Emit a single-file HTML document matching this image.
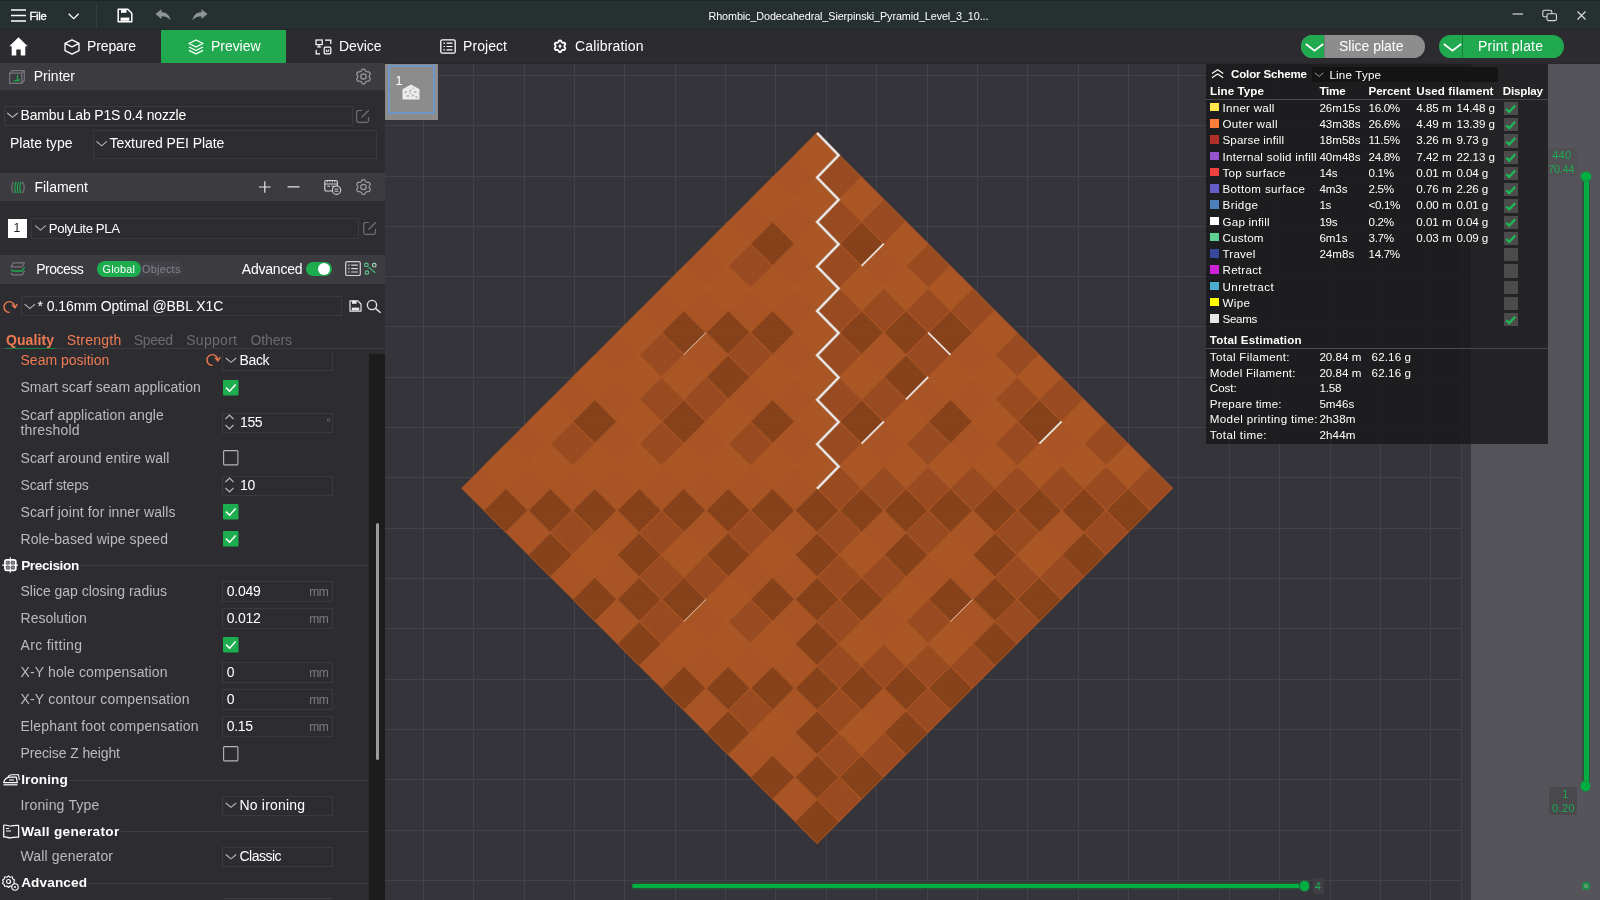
<!DOCTYPE html>
<html lang="en"><head><meta charset="utf-8"><title>Bambu Studio</title>
<style>
html,body{margin:0;padding:0;background:#35343a;}
body{width:1600px;height:900px;position:relative;overflow:hidden;font-family:'Liberation Sans', sans-serif;}
.t{position:absolute;white-space:pre;font-family:'Liberation Sans', sans-serif;}
svg{position:absolute;overflow:visible}

</style></head><body>
<div style="position:absolute;left:385px;top:63px;width:1215px;height:837px;background:#35343a;overflow:hidden"><svg width="1215" height="837" viewBox="385 63 1215 837" style="left:0;top:0"><rect x="1461.5" y="0" width="10" height="900" fill="#38373d"/><rect x="1471" y="0" width="140" height="900" fill="#55545a"/><path d="M423.5 0V900M473.5 0V900M524.5 0V900M574.5 0V900M624.5 0V900M675.5 0V900M725.5 0V900M775.5 0V900M826.5 0V900M876.5 0V900M927.5 0V900M977.5 0V900M1027.5 0V900M1078.5 0V900M1128.5 0V900M1178.5 0V900M1229.5 0V900M1279.5 0V900M1330.5 0V900M1380.5 0V900M1430.5 0V900M385 75.5H1461.5M385 125.5H1461.5M385 176.5H1461.5M385 226.5H1461.5M385 276.5H1461.5M385 326.5H1461.5M385 377.5H1461.5M385 427.5H1461.5M385 477.5H1461.5M385 528.5H1461.5M385 578.5H1461.5M385 628.5H1461.5M385 679.5H1461.5M385 729.5H1461.5M385 779.5H1461.5M385 830.5H1461.5M385 880.5H1461.5" stroke="#434248" stroke-width="1" fill="none"/><path d="M1461.5 0V900" stroke="#45444a" stroke-width="1" fill="none"/><defs><pattern id="hh" width="8" height="4.6" patternUnits="userSpaceOnUse"><rect width="8" height="4.6" fill="#88421b"/><rect y="0" width="8" height="2" fill="#85411a"/></pattern><pattern id="vv" width="4.4" height="8" patternUnits="userSpaceOnUse"><rect width="4.4" height="8" fill="#984a20"/><rect x="0" width="1.6" height="8" fill="#9a4b21"/></pattern><clipPath id="dc"><path d="M461.4 488.2L817.1 132.5L1172.8 488.2L817.1 843.9Z"/></clipPath></defs><path d="M461.4 488.2L817.1 132.5L1172.8 488.2L817.1 843.9Z" fill="#a85424"/><path d="M483.7 466.0L505.9 443.7L528.1 466.0L505.9 488.2ZM528.1 421.5L550.3 399.3L572.6 421.5L550.3 443.7ZM528.1 466.0L550.3 443.7L572.6 466.0L550.3 488.2ZM572.6 466.0L594.8 443.7L617.0 466.0L594.8 488.2ZM572.6 377.0L594.8 354.8L617.0 377.0L594.8 399.3ZM617.0 332.6L639.3 310.4L661.5 332.6L639.3 354.8ZM617.0 377.0L639.3 354.8L661.5 377.0L639.3 399.3ZM617.0 421.5L639.3 399.3L661.5 421.5L639.3 443.7ZM617.0 466.0L639.3 443.7L661.5 466.0L639.3 488.2ZM661.5 377.0L683.7 354.8L706.0 377.0L683.7 399.3ZM572.6 554.9L594.8 532.7L617.0 554.9L594.8 577.1ZM661.5 554.9L683.7 532.7L706.0 554.9L683.7 577.1ZM661.5 466.0L683.7 443.7L706.0 466.0L683.7 488.2ZM706.0 421.5L728.2 399.3L750.4 421.5L728.2 443.7ZM706.0 466.0L728.2 443.7L750.4 466.0L728.2 488.2ZM750.4 466.0L772.6 443.7L794.9 466.0L772.6 488.2ZM661.5 288.1L683.7 265.9L706.0 288.1L683.7 310.4ZM706.0 243.7L728.2 221.4L750.4 243.7L728.2 265.9ZM706.0 288.1L728.2 265.9L750.4 288.1L728.2 310.4ZM750.4 288.1L772.6 265.9L794.9 288.1L772.6 310.4ZM750.4 199.2L772.6 177.0L794.9 199.2L772.6 221.4ZM794.9 154.8L817.1 132.5L839.3 154.8L817.1 177.0ZM794.9 199.2L817.1 177.0L839.3 199.2L817.1 221.4ZM794.9 243.7L817.1 221.4L839.3 243.7L817.1 265.9ZM794.9 288.1L817.1 265.9L839.3 288.1L817.1 310.4ZM839.3 199.2L861.6 177.0L883.8 199.2L861.6 221.4ZM750.4 377.0L772.6 354.8L794.9 377.0L772.6 399.3ZM794.9 332.6L817.1 310.4L839.3 332.6L817.1 354.8ZM794.9 377.0L817.1 354.8L839.3 377.0L817.1 399.3ZM794.9 421.5L817.1 399.3L839.3 421.5L817.1 443.7ZM794.9 466.0L817.1 443.7L839.3 466.0L817.1 488.2ZM839.3 377.0L861.6 354.8L883.8 377.0L861.6 399.3ZM839.3 288.1L861.6 265.9L883.8 288.1L861.6 310.4ZM883.8 243.7L906.0 221.4L928.2 243.7L906.0 265.9ZM883.8 288.1L906.0 265.9L928.2 288.1L906.0 310.4ZM928.2 288.1L950.5 265.9L972.7 288.1L950.5 310.4ZM661.5 643.8L683.7 621.6L706.0 643.8L683.7 666.0ZM706.0 599.4L728.2 577.1L750.4 599.4L728.2 621.6ZM706.0 643.8L728.2 621.6L750.4 643.8L728.2 666.0ZM750.4 643.8L772.6 621.6L794.9 643.8L772.6 666.0ZM750.4 554.9L772.6 532.7L794.9 554.9L772.6 577.1ZM839.3 554.9L861.6 532.7L883.8 554.9L861.6 577.1ZM750.4 732.7L772.6 710.5L794.9 732.7L772.6 755.0ZM839.3 732.7L861.6 710.5L883.8 732.7L861.6 755.0ZM839.3 643.8L861.6 621.6L883.8 643.8L861.6 666.0ZM883.8 599.4L906.0 577.1L928.2 599.4L906.0 621.6ZM883.8 643.8L906.0 621.6L928.2 643.8L906.0 666.0ZM928.2 643.8L950.5 621.6L972.7 643.8L950.5 666.0ZM839.3 466.0L861.6 443.7L883.8 466.0L861.6 488.2ZM883.8 421.5L906.0 399.3L928.2 421.5L906.0 443.7ZM883.8 466.0L906.0 443.7L928.2 466.0L906.0 488.2ZM928.2 466.0L950.5 443.7L972.7 466.0L950.5 488.2ZM928.2 377.0L950.5 354.8L972.7 377.0L950.5 399.3ZM972.7 332.6L994.9 310.4L1017.2 332.6L994.9 354.8ZM972.7 377.0L994.9 354.8L1017.2 377.0L994.9 399.3ZM972.7 421.5L994.9 399.3L1017.2 421.5L994.9 443.7ZM972.7 466.0L994.9 443.7L1017.2 466.0L994.9 488.2ZM1017.2 377.0L1039.4 354.8L1061.6 377.0L1039.4 399.3ZM928.2 554.9L950.5 532.7L972.7 554.9L950.5 577.1ZM1017.2 554.9L1039.4 532.7L1061.6 554.9L1039.4 577.1ZM1017.2 466.0L1039.4 443.7L1061.6 466.0L1039.4 488.2ZM1061.6 421.5L1083.9 399.3L1106.1 421.5L1083.9 443.7ZM1061.6 466.0L1083.9 443.7L1106.1 466.0L1083.9 488.2ZM1106.1 466.0L1128.3 443.7L1150.5 466.0L1128.3 488.2Z" fill="#aa5625" stroke="#aa5625" stroke-width="0.4"/><path d="M550.3 443.7L572.6 421.5L594.8 443.7L572.6 466.0ZM550.3 532.7L572.6 510.4L594.8 532.7L572.6 554.9ZM639.3 354.8L661.5 332.6L683.7 354.8L661.5 377.0ZM639.3 443.7L661.5 421.5L683.7 443.7L661.5 466.0ZM683.7 399.3L706.0 377.0L728.2 399.3L706.0 421.5ZM639.3 399.3L661.5 377.0L683.7 399.3L661.5 421.5ZM639.3 532.7L661.5 510.4L683.7 532.7L661.5 554.9ZM639.3 621.6L661.5 599.4L683.7 621.6L661.5 643.8ZM683.7 577.1L706.0 554.9L728.2 577.1L706.0 599.4ZM639.3 577.1L661.5 554.9L683.7 577.1L661.5 599.4ZM728.2 443.7L750.4 421.5L772.6 443.7L750.4 466.0ZM728.2 532.7L750.4 510.4L772.6 532.7L750.4 554.9ZM728.2 265.9L750.4 243.7L772.6 265.9L750.4 288.1ZM728.2 354.8L750.4 332.6L772.6 354.8L750.4 377.0ZM817.1 177.0L839.3 154.8L861.6 177.0L839.3 199.2ZM817.1 265.9L839.3 243.7L861.6 265.9L839.3 288.1ZM861.6 221.4L883.8 199.2L906.0 221.4L883.8 243.7ZM817.1 221.4L839.3 199.2L861.6 221.4L839.3 243.7ZM817.1 354.8L839.3 332.6L861.6 354.8L839.3 377.0ZM817.1 443.7L839.3 421.5L861.6 443.7L839.3 466.0ZM861.6 399.3L883.8 377.0L906.0 399.3L883.8 421.5ZM817.1 399.3L839.3 377.0L861.6 399.3L839.3 421.5ZM861.6 310.4L883.8 288.1L906.0 310.4L883.8 332.6ZM817.1 310.4L839.3 288.1L861.6 310.4L839.3 332.6ZM906.0 265.9L928.2 243.7L950.5 265.9L928.2 288.1ZM906.0 354.8L928.2 332.6L950.5 354.8L928.2 377.0ZM950.5 310.4L972.7 288.1L994.9 310.4L972.7 332.6ZM906.0 310.4L928.2 288.1L950.5 310.4L928.2 332.6ZM728.2 621.6L750.4 599.4L772.6 621.6L750.4 643.8ZM728.2 710.5L750.4 688.3L772.6 710.5L750.4 732.7ZM817.1 532.7L839.3 510.4L861.6 532.7L839.3 554.9ZM817.1 621.6L839.3 599.4L861.6 621.6L839.3 643.8ZM861.6 577.1L883.8 554.9L906.0 577.1L883.8 599.4ZM817.1 577.1L839.3 554.9L861.6 577.1L839.3 599.4ZM817.1 710.5L839.3 688.3L861.6 710.5L839.3 732.7ZM817.1 799.4L839.3 777.2L861.6 799.4L839.3 821.6ZM861.6 755.0L883.8 732.7L906.0 755.0L883.8 777.2ZM817.1 755.0L839.3 732.7L861.6 755.0L839.3 777.2ZM861.6 666.0L883.8 643.8L906.0 666.0L883.8 688.3ZM817.1 666.0L839.3 643.8L861.6 666.0L839.3 688.3ZM906.0 621.6L928.2 599.4L950.5 621.6L928.2 643.8ZM906.0 710.5L928.2 688.3L950.5 710.5L928.2 732.7ZM950.5 666.0L972.7 643.8L994.9 666.0L972.7 688.3ZM906.0 666.0L928.2 643.8L950.5 666.0L928.2 688.3ZM861.6 488.2L883.8 466.0L906.0 488.2L883.8 510.4ZM817.1 488.2L839.3 466.0L861.6 488.2L839.3 510.4ZM906.0 443.7L928.2 421.5L950.5 443.7L928.2 466.0ZM906.0 532.7L928.2 510.4L950.5 532.7L928.2 554.9ZM950.5 488.2L972.7 466.0L994.9 488.2L972.7 510.4ZM906.0 488.2L928.2 466.0L950.5 488.2L928.2 510.4ZM994.9 354.8L1017.2 332.6L1039.4 354.8L1017.2 377.0ZM994.9 443.7L1017.2 421.5L1039.4 443.7L1017.2 466.0ZM1039.4 399.3L1061.6 377.0L1083.9 399.3L1061.6 421.5ZM994.9 399.3L1017.2 377.0L1039.4 399.3L1017.2 421.5ZM994.9 532.7L1017.2 510.4L1039.4 532.7L1017.2 554.9ZM994.9 621.6L1017.2 599.4L1039.4 621.6L1017.2 643.8ZM1039.4 577.1L1061.6 554.9L1083.9 577.1L1061.6 599.4ZM994.9 577.1L1017.2 554.9L1039.4 577.1L1017.2 599.4ZM1039.4 488.2L1061.6 466.0L1083.9 488.2L1061.6 510.4ZM994.9 488.2L1017.2 466.0L1039.4 488.2L1017.2 510.4ZM1083.9 443.7L1106.1 421.5L1128.3 443.7L1106.1 466.0ZM1083.9 532.7L1106.1 510.4L1128.3 532.7L1106.1 554.9ZM1128.3 488.2L1150.5 466.0L1172.8 488.2L1150.5 510.4ZM1083.9 488.2L1106.1 466.0L1128.3 488.2L1106.1 510.4Z" fill="url(#vv)" stroke="#984a20" stroke-width="0.4"/><path d="M483.7 510.4L505.9 488.2L528.1 510.4L505.9 532.7ZM528.1 510.4L550.3 488.2L572.6 510.4L550.3 532.7ZM528.1 554.9L550.3 532.7L572.6 554.9L550.3 577.1ZM572.6 510.4L594.8 488.2L617.0 510.4L594.8 532.7ZM572.6 421.5L594.8 399.3L617.0 421.5L594.8 443.7ZM661.5 421.5L683.7 399.3L706.0 421.5L683.7 443.7ZM572.6 599.4L594.8 577.1L617.0 599.4L594.8 621.6ZM617.0 510.4L639.3 488.2L661.5 510.4L639.3 532.7ZM617.0 554.9L639.3 532.7L661.5 554.9L639.3 577.1ZM617.0 599.4L639.3 577.1L661.5 599.4L639.3 621.6ZM617.0 643.8L639.3 621.6L661.5 643.8L639.3 666.0ZM661.5 599.4L683.7 577.1L706.0 599.4L683.7 621.6ZM661.5 510.4L683.7 488.2L706.0 510.4L683.7 532.7ZM706.0 510.4L728.2 488.2L750.4 510.4L728.2 532.7ZM706.0 554.9L728.2 532.7L750.4 554.9L728.2 577.1ZM750.4 510.4L772.6 488.2L794.9 510.4L772.6 532.7ZM661.5 332.6L683.7 310.4L706.0 332.6L683.7 354.8ZM706.0 332.6L728.2 310.4L750.4 332.6L728.2 354.8ZM706.0 377.0L728.2 354.8L750.4 377.0L728.2 399.3ZM750.4 332.6L772.6 310.4L794.9 332.6L772.6 354.8ZM750.4 243.7L772.6 221.4L794.9 243.7L772.6 265.9ZM839.3 243.7L861.6 221.4L883.8 243.7L861.6 265.9ZM750.4 421.5L772.6 399.3L794.9 421.5L772.6 443.7ZM839.3 421.5L861.6 399.3L883.8 421.5L861.6 443.7ZM839.3 332.6L861.6 310.4L883.8 332.6L861.6 354.8ZM883.8 332.6L906.0 310.4L928.2 332.6L906.0 354.8ZM883.8 377.0L906.0 354.8L928.2 377.0L906.0 399.3ZM928.2 332.6L950.5 310.4L972.7 332.6L950.5 354.8ZM661.5 688.3L683.7 666.0L706.0 688.3L683.7 710.5ZM706.0 688.3L728.2 666.0L750.4 688.3L728.2 710.5ZM706.0 732.7L728.2 710.5L750.4 732.7L728.2 755.0ZM750.4 688.3L772.6 666.0L794.9 688.3L772.6 710.5ZM750.4 599.4L772.6 577.1L794.9 599.4L772.6 621.6ZM794.9 510.4L817.1 488.2L839.3 510.4L817.1 532.7ZM794.9 554.9L817.1 532.7L839.3 554.9L817.1 577.1ZM794.9 599.4L817.1 577.1L839.3 599.4L817.1 621.6ZM794.9 643.8L817.1 621.6L839.3 643.8L817.1 666.0ZM839.3 599.4L861.6 577.1L883.8 599.4L861.6 621.6ZM750.4 777.2L772.6 755.0L794.9 777.2L772.6 799.4ZM794.9 688.3L817.1 666.0L839.3 688.3L817.1 710.5ZM794.9 732.7L817.1 710.5L839.3 732.7L817.1 755.0ZM794.9 777.2L817.1 755.0L839.3 777.2L817.1 799.4ZM794.9 821.6L817.1 799.4L839.3 821.6L817.1 843.9ZM839.3 777.2L861.6 755.0L883.8 777.2L861.6 799.4ZM839.3 688.3L861.6 666.0L883.8 688.3L861.6 710.5ZM883.8 688.3L906.0 666.0L928.2 688.3L906.0 710.5ZM883.8 732.7L906.0 710.5L928.2 732.7L906.0 755.0ZM928.2 688.3L950.5 666.0L972.7 688.3L950.5 710.5ZM839.3 510.4L861.6 488.2L883.8 510.4L861.6 532.7ZM883.8 510.4L906.0 488.2L928.2 510.4L906.0 532.7ZM883.8 554.9L906.0 532.7L928.2 554.9L906.0 577.1ZM928.2 510.4L950.5 488.2L972.7 510.4L950.5 532.7ZM928.2 421.5L950.5 399.3L972.7 421.5L950.5 443.7ZM1017.2 421.5L1039.4 399.3L1061.6 421.5L1039.4 443.7ZM928.2 599.4L950.5 577.1L972.7 599.4L950.5 621.6ZM972.7 510.4L994.9 488.2L1017.2 510.4L994.9 532.7ZM972.7 554.9L994.9 532.7L1017.2 554.9L994.9 577.1ZM972.7 599.4L994.9 577.1L1017.2 599.4L994.9 621.6ZM972.7 643.8L994.9 621.6L1017.2 643.8L994.9 666.0ZM1017.2 599.4L1039.4 577.1L1061.6 599.4L1039.4 621.6ZM1017.2 510.4L1039.4 488.2L1061.6 510.4L1039.4 532.7ZM1061.6 510.4L1083.9 488.2L1106.1 510.4L1083.9 532.7ZM1061.6 554.9L1083.9 532.7L1106.1 554.9L1083.9 577.1ZM1106.1 510.4L1128.3 488.2L1150.5 510.4L1128.3 532.7Z" fill="url(#hh)" stroke="#88421b" stroke-width="0.4"/><path d="M16.8 43.6L906.0 932.8M16.8 932.8L906.0 43.6M61.3 43.6L950.5 932.8M61.3 932.8L950.5 43.6M105.7 43.6L994.9 932.8M105.7 932.8L994.9 43.6M150.2 43.6L1039.4 932.8M150.2 932.8L1039.4 43.6M194.7 43.6L1083.9 932.8M194.7 932.8L1083.9 43.6M239.1 43.6L1128.3 932.8M239.1 932.8L1128.3 43.6M283.6 43.6L1172.8 932.8M283.6 932.8L1172.8 43.6M328.0 43.6L1217.2 932.8M328.0 932.8L1217.2 43.6M372.5 43.6L1261.7 932.8M372.5 932.8L1261.7 43.6M417.0 43.6L1306.2 932.8M417.0 932.8L1306.2 43.6M461.4 43.6L1350.6 932.8M461.4 932.8L1350.6 43.6M505.9 43.6L1395.1 932.8M505.9 932.8L1395.1 43.6M550.3 43.6L1439.5 932.8M550.3 932.8L1439.5 43.6M594.8 43.6L1484.0 932.8M594.8 932.8L1484.0 43.6M639.3 43.6L1528.5 932.8M639.3 932.8L1528.5 43.6M683.7 43.6L1572.9 932.8M683.7 932.8L1572.9 43.6M728.2 43.6L1617.4 932.8M728.2 932.8L1617.4 43.6" stroke="#ae5927" stroke-opacity="0.7" stroke-width="1.5" fill="none" clip-path="url(#dc)"/><polyline points="817.1,133.1 838.7,155.2 817.1,177.5 838.7,199.7 817.1,221.9 838.7,244.2 817.1,266.4 838.7,288.6 817.1,310.9 838.7,333.1 817.1,355.3 838.7,377.5 817.1,399.8 838.7,422.0 817.1,444.2 838.7,466.5 817.1,488.7" fill="none" stroke="#b9aca6" stroke-width="3.2" stroke-linejoin="miter" stroke-opacity="0.6"/><polyline points="817.1,133.1 838.7,155.2 817.1,177.5 838.7,199.7 817.1,221.9 838.7,244.2 817.1,266.4 838.7,288.6 817.1,310.9 838.7,333.1 817.1,355.3 838.7,377.5 817.1,399.8 838.7,422.0 817.1,444.2 838.7,466.5 817.1,488.7" fill="none" stroke="#ece8e4" stroke-width="2.1" stroke-linejoin="miter"/><path d="M861.6 265.9L883.8 243.7" stroke="#e6e0dc" stroke-width="1.8" fill="none"/><path d="M928.2 332.6L950.5 354.8" stroke="#e6e0dc" stroke-width="1.8" fill="none"/><path d="M906.0 399.3L928.2 377.0" stroke="#e6e0dc" stroke-width="1.8" fill="none"/><path d="M861.6 443.7L883.8 421.5" stroke="#e6e0dc" stroke-width="1.8" fill="none"/><path d="M1039.4 443.7L1061.6 421.5" stroke="#e6e0dc" stroke-width="1.8" fill="none"/><path d="M683.7 354.8L706.0 332.6" stroke="#d9c9c0" stroke-width="1.0" fill="none"/><path d="M683.7 621.6L706.0 599.4" stroke="#d9c9c0" stroke-width="1.0" fill="none"/><path d="M950.5 621.6L972.7 599.4" stroke="#d9c9c0" stroke-width="1.0" fill="none"/></svg></div><div style="position:absolute;left:0px;top:0px;width:1600px;height:29px;background:#273031;"></div><div style="position:absolute;left:0px;top:0px;width:1600px;height:1px;background:#1f2627;"></div><div style="position:absolute;left:0px;top:29px;width:1600px;height:1px;background:#25292b;"></div><div style="position:absolute;left:0px;top:30px;width:1600px;height:33px;background:#2c2c30;"></div><svg width="16" height="14" style="left:10.5px;top:8.5px" viewBox="0 0 16 14"><path d="M0 1H15M0 6.5H15M0 12H15" stroke="#fff" stroke-width="1.6" fill="none"/></svg><svg width="12" height="7" style="left:68px;top:12.5px" viewBox="0 0 12 7"><path d="M0.7 0.7L5.7 5.7L10.7 0.7" stroke="#fff" stroke-width="1.3" fill="none"/></svg><div style="position:absolute;left:96px;top:4px;width:1px;height:24px;background:#333d3f;"></div><svg width="16" height="15" style="left:117px;top:8px" viewBox="0 0 16 15"><path d="M1.2 1.2H10.8L14.8 5.2V13.8H1.2Z" stroke="#fff" stroke-width="1.5" fill="none" stroke-linejoin="round"/><rect x="4" y="1.2" width="5.5" height="3.6" fill="#fff"/><rect x="3.6" y="9.6" width="8.8" height="3.2" fill="#fff"/></svg><svg width="16" height="12" style="left:154.5px;top:9px" viewBox="0 0 16 12"><path d="M0.5 5L6.5 0.3V3.2C11 3.2 14.8 5.8 15.5 11.5C13.3 8.3 10.5 7.3 6.5 7.3V10Z" fill="#8f9596"/></svg><svg width="16" height="12" style="left:192px;top:9px" viewBox="0 0 16 12"><path d="M15.5 5L9.5 0.3V3.2C5 3.2 1.2 5.8 0.5 11.5C2.7 8.3 5.5 7.3 9.5 7.3V10Z" fill="#8f9596"/></svg><svg width="80" height="14" style="left:1510px;top:8px" viewBox="0 0 80 14"><path d="M2.5 6H13" stroke="#d8dadb" stroke-width="1.2"/><rect x="32.8" y="2.2" width="9" height="6.6" rx="1.5" fill="none" stroke="#d8dadb" stroke-width="1.1"/><rect x="37" y="5.8" width="9.5" height="6.8" rx="1.5" fill="#283133" stroke="#d8dadb" stroke-width="1.1"/><path d="M67.5 3.5L75.5 11.5M75.5 3.5L67.5 11.5" stroke="#d8dadb" stroke-width="1.2"/></svg><svg width="19" height="19" style="left:9px;top:37px" viewBox="0 0 19 19"><path d="M9.5 0.3L0.3 9.3H2.7V18.5H7.3V12.5H11.7V18.5H16.3V9.3H18.7Z" fill="#fff"/></svg><svg width="16" height="16" style="left:63.5px;top:38.5px" viewBox="0 0 16 16"><path d="M8 0.8L15 4.3V11.7L8 15.2L1 11.7V4.3Z M1 4.3L8 7.8L15 4.3" stroke="#fff" stroke-width="1.3" fill="none" stroke-linejoin="round"/></svg><div style="position:absolute;left:161px;top:30px;width:125px;height:32.5px;background:#21a94f;"></div><svg width="16" height="16" style="left:187.5px;top:38.5px" viewBox="0 0 16 16"><path d="M8 1L15 4.5L8 8L1 4.5Z M1 8L8 11.5L15 8 M1 11.3L8 14.8L15 11.3" stroke="#fff" stroke-width="1.3" fill="none" stroke-linejoin="round"/></svg><svg width="17" height="16" style="left:315px;top:38.5px" viewBox="0 0 17 16"><rect x="1" y="1" width="6.2" height="4.6" fill="none" stroke="#fff" stroke-width="1.2"/><path d="M4 5.6V8M2 8H6.2" stroke="#fff" stroke-width="1.2"/><path d="M10 1.2H15.8V5 M1.2 11V14.8H5" stroke="#fff" stroke-width="1.2" fill="none"/><rect x="9.2" y="8.2" width="6.6" height="6.6" rx="1" fill="none" stroke="#fff" stroke-width="1.2"/><path d="M11.3 10.5V12.3H13.7V10.5" stroke="#fff" stroke-width="1" fill="none"/></svg><svg width="16" height="15" style="left:440px;top:39px" viewBox="0 0 16 15"><rect x="0.8" y="0.8" width="14.4" height="13.4" rx="1.5" fill="none" stroke="#fff" stroke-width="1.3"/><path d="M3.5 4.2H5M6.5 4.2H12.5M3.5 7.5H5M6.5 7.5H12.5M3.5 10.8H5M6.5 10.8H12.5" stroke="#fff" stroke-width="1.2"/></svg><svg width="1" height="1" style="left:0;top:0"><polygon points="565.02,49.20 564.75,49.63 564.39,49.98 563.61,49.91 562.88,49.73 562.53,49.91 562.20,50.12 561.86,50.30 561.53,50.51 561.32,51.23 561.00,51.94 560.51,52.08 560.00,52.10 559.49,52.08 559.00,51.94 558.68,51.23 558.47,50.51 558.14,50.30 557.80,50.12 557.47,49.91 557.12,49.73 556.39,49.91 555.61,49.98 555.25,49.63 554.98,49.20 554.74,48.75 554.62,48.26 555.07,47.62 555.59,47.08 555.61,46.68 555.59,46.30 555.61,45.92 555.59,45.52 555.07,44.98 554.62,44.34 554.74,43.85 554.98,43.40 555.25,42.97 555.61,42.62 556.39,42.69 557.12,42.87 557.47,42.69 557.80,42.48 558.14,42.30 558.47,42.09 558.68,41.37 559.00,40.66 559.49,40.52 560.00,40.50 560.51,40.52 561.00,40.66 561.32,41.37 561.53,42.09 561.86,42.30 562.20,42.48 562.53,42.69 562.88,42.87 563.61,42.69 564.39,42.62 564.75,42.97 565.02,43.40 565.26,43.85 565.38,44.34 564.93,44.98 564.41,45.52 564.39,45.92 564.41,46.30 564.39,46.68 564.41,47.08 564.93,47.62 565.38,48.26 565.26,48.75" fill="none" stroke="#fff" stroke-width="1.8" stroke-linejoin="round"/><path d="M560 44.099999999999994L562 46.5H560.7V48.3H559.3V46.5H558Z" fill="#fff"/></svg><div style="position:absolute;left:1301px;top:35px;width:124px;height:23px;border-radius:11.5px;background:#8d8d8d;overflow:hidden"><div style="position:absolute;left:0;top:0;width:23px;height:23px;background:#21a94f"></div><div style="position:absolute;left:23px;top:0;width:1px;height:23px;background:#6d7d72"></div></div><div style="position:absolute;left:1439px;top:35px;width:125px;height:23px;border-radius:11.5px;background:#21a94f;overflow:hidden"><div style="position:absolute;left:23px;top:0;width:1px;height:23px;background:#17803a"></div></div><svg width="19" height="9" style="left:1304.8px;top:42.6px" viewBox="0 0 19 9"><path d="M0.8 1L9.5 7.6L18.2 1" stroke="#fff" stroke-width="1.8" fill="none"/></svg><svg width="19" height="9" style="left:1442.8px;top:42.6px" viewBox="0 0 19 9"><path d="M0.8 1L9.5 7.6L18.2 1" stroke="#fff" stroke-width="1.8" fill="none"/></svg><div style="position:absolute;left:0px;top:63px;width:385px;height:837px;background:#2d2d31;"></div><div style="position:absolute;left:0px;top:62.5px;width:385px;height:27.5px;background:#3b3b40;"></div><svg width="16" height="14" style="left:9px;top:69.5px" viewBox="0 0 16 14"><path d="M0.7 3.2L3.2 0.7H15.3V10.5L12.8 13.3H0.7Z M0.7 3.2H12.8V13.3 M12.8 3.2L15.3 0.7" fill="none" stroke="#77777d" stroke-width="1.2" stroke-linejoin="round"/><path d="M3 11.3H10.5V9L7 9.8L3 11.3Z" fill="#1dad4f"/><path d="M8.5 5V9" stroke="#1dad4f" stroke-width="1.2"/></svg><svg width="1" height="1" style="left:0;top:0"><polygon points="369.82,80.15 369.48,80.69 368.98,81.10 368.15,81.15 367.35,81.09 366.85,81.28 366.42,81.56 365.97,81.79 365.55,82.13 365.20,82.85 364.74,83.55 364.14,83.77 363.50,83.80 362.86,83.77 362.26,83.55 361.80,82.85 361.45,82.13 361.03,81.79 360.58,81.56 360.15,81.28 359.65,81.09 358.85,81.15 358.02,81.10 357.52,80.69 357.18,80.15 356.88,79.59 356.78,78.95 357.15,78.20 357.60,77.54 357.68,77.01 357.66,76.50 357.68,75.99 357.60,75.46 357.15,74.80 356.78,74.05 356.88,73.41 357.18,72.85 357.52,72.31 358.02,71.90 358.85,71.85 359.65,71.91 360.15,71.72 360.58,71.44 361.03,71.21 361.45,70.87 361.80,70.15 362.26,69.45 362.86,69.23 363.50,69.20 364.14,69.23 364.74,69.45 365.20,70.15 365.55,70.87 365.97,71.21 366.42,71.44 366.85,71.72 367.35,71.91 368.15,71.85 368.98,71.90 369.48,72.31 369.82,72.85 370.12,73.41 370.22,74.05 369.85,74.80 369.40,75.46 369.32,75.99 369.34,76.50 369.32,77.01 369.40,77.54 369.85,78.20 370.22,78.95 370.12,79.59" fill="none" stroke="#9a9aa0" stroke-width="1.25" stroke-linejoin="round"/><circle cx="363.5" cy="76.5" r="2.70" fill="none" stroke="#9a9aa0" stroke-width="1.25"/></svg><div style="position:absolute;left:3.5px;top:105.5px;width:347px;height:18.5px;border:1px solid #39393e;background:none;box-sizing:content-box"></div><svg width="1" height="1" style="left:0;top:0"><path d="M7.3 113.0L12.5 117.4L17.7 113.0" stroke="#b9b9be" stroke-width="1.1" fill="none"/></svg><svg width="14" height="14" style="left:356px;top:108.5px" viewBox="0 0 14 14"><path d="M6 1.5H2.5C1.4 1.5 0.7 2.2 0.7 3.3V11.5C0.7 12.6 1.4 13.3 2.5 13.3H10.7C11.8 13.3 12.5 12.6 12.5 11.5V8" fill="none" stroke="#6f6f75" stroke-width="1.2"/><path d="M5.5 8.5L12.8 1.2" stroke="#6f6f75" stroke-width="1.3"/></svg><div style="position:absolute;left:92.5px;top:130px;width:282px;height:26.5px;border:1px solid #39393e;background:none;box-sizing:content-box"></div><svg width="1" height="1" style="left:0;top:0"><path d="M96.5 141.39999999999998L101.7 145.79999999999998L106.9 141.39999999999998" stroke="#b9b9be" stroke-width="1.1" fill="none"/></svg><div style="position:absolute;left:0px;top:173px;width:385px;height:28px;background:#3b3b40;"></div><svg width="14" height="13" style="left:10.5px;top:180.5px" viewBox="0 0 14 13"><path d="M2.6 0.8C0.2 3.5 0.2 9.5 2.6 12.2" fill="none" stroke="#77777d" stroke-width="1.2"/><path d="M11.4 0.8C13.8 3.5 13.8 9.5 11.4 12.2" fill="none" stroke="#77777d" stroke-width="1.2"/><path d="M5.2 0.8C3.4 3.5 3.4 9.5 5.2 12.2M7.7 0.8C5.9 3.5 5.9 9.5 7.7 12.2M10.2 0.8C8.4 3.5 8.4 9.5 10.2 12.2" fill="none" stroke="#1dad4f" stroke-width="1.2"/></svg><svg width="1" height="1" style="left:0;top:0"><path d="M259 187H270.6M264.8 181.2V192.8M287.6 186.8H299.4" stroke="#e8e8ea" stroke-width="1.2"/></svg><svg width="18" height="16" style="left:324px;top:179px" viewBox="0 0 18 16"><rect x="0.8" y="1.5" width="12.6" height="10.5" rx="1.5" fill="none" stroke="#d2d2d6" stroke-width="1.2"/><path d="M0.8 5H13.4M3.2 7.3H6M7.5 7.3H10.5" stroke="#d2d2d6" stroke-width="1.1"/><path d="M3.4 1.5V3.2M5.9 1.5V3.2M8.4 1.5V3.2M10.9 1.5V3.2" stroke="#d2d2d6" stroke-width="1"/><circle cx="12.5" cy="11.2" r="4.2" fill="#3b3b40" stroke="#d2d2d6" stroke-width="1.1"/><path d="M10.5 10.2H14.5M10.5 12.3H14.5" stroke="#d2d2d6" stroke-width="0.9"/></svg><svg width="1" height="1" style="left:0;top:0"><polygon points="369.82,190.65 369.48,191.19 368.98,191.60 368.15,191.65 367.35,191.59 366.85,191.78 366.42,192.06 365.97,192.29 365.55,192.63 365.20,193.35 364.74,194.05 364.14,194.27 363.50,194.30 362.86,194.27 362.26,194.05 361.80,193.35 361.45,192.63 361.03,192.29 360.58,192.06 360.15,191.78 359.65,191.59 358.85,191.65 358.02,191.60 357.52,191.19 357.18,190.65 356.88,190.09 356.78,189.45 357.15,188.70 357.60,188.04 357.68,187.51 357.66,187.00 357.68,186.49 357.60,185.96 357.15,185.30 356.78,184.55 356.88,183.91 357.18,183.35 357.52,182.81 358.02,182.40 358.85,182.35 359.65,182.41 360.15,182.22 360.58,181.94 361.03,181.71 361.45,181.37 361.80,180.65 362.26,179.95 362.86,179.73 363.50,179.70 364.14,179.73 364.74,179.95 365.20,180.65 365.55,181.37 365.97,181.71 366.42,181.94 366.85,182.22 367.35,182.41 368.15,182.35 368.98,182.40 369.48,182.81 369.82,183.35 370.12,183.91 370.22,184.55 369.85,185.30 369.40,185.96 369.32,186.49 369.34,187.00 369.32,187.51 369.40,188.04 369.85,188.70 370.22,189.45 370.12,190.09" fill="none" stroke="#9a9aa0" stroke-width="1.25" stroke-linejoin="round"/><circle cx="363.5" cy="187" r="2.70" fill="none" stroke="#9a9aa0" stroke-width="1.25"/></svg><div style="position:absolute;left:7.5px;top:218.8px;width:19px;height:19px;background:#fff;"></div><div style="position:absolute;left:31px;top:218px;width:326px;height:18.5px;border:1px solid #39393e;background:none;box-sizing:content-box"></div><svg width="1" height="1" style="left:0;top:0"><path d="M35.3 225.7L40.5 230.1L45.699999999999996 225.7" stroke="#b9b9be" stroke-width="1.1" fill="none"/></svg><svg width="14" height="14" style="left:363px;top:221px" viewBox="0 0 14 14"><path d="M6 1.5H2.5C1.4 1.5 0.7 2.2 0.7 3.3V11.5C0.7 12.6 1.4 13.3 2.5 13.3H10.7C11.8 13.3 12.5 12.6 12.5 11.5V8" fill="none" stroke="#6f6f75" stroke-width="1.2"/><path d="M5.5 8.5L12.8 1.2" stroke="#6f6f75" stroke-width="1.3"/></svg><div style="position:absolute;left:0px;top:255px;width:385px;height:28.5px;background:#3b3b40;"></div><svg width="16" height="14" style="left:10px;top:262px" viewBox="0 0 16 14"><path d="M3.5 0.8H14.5L12 4.8H1Z" fill="none" stroke="#77777d" stroke-width="1.2" stroke-linejoin="round"/><path d="M1.2 7.3C1.5 8.7 2 9 3 9H12L14.6 5.2" fill="none" stroke="#1dad4f" stroke-width="1.3"/><path d="M1.2 11C1.5 12.4 2 12.9 3 12.9H12L14.6 9" fill="none" stroke="#77777d" stroke-width="1.3"/></svg><div style="position:absolute;left:97px;top:261px;width:85.5px;height:16px;border-radius:8px;background:#404046"></div><div style="position:absolute;left:97px;top:261px;width:43.5px;height:16px;border-radius:8px;background:#1dad4f"></div><div style="position:absolute;left:305.5px;top:261.8px;width:26px;height:14.6px;border-radius:7.3px;background:#1dad4f"></div><div style="position:absolute;left:317.6px;top:263px;width:12.2px;height:12.2px;border-radius:6.1px;background:#fff"></div><svg width="16" height="16" style="left:344.5px;top:261px" viewBox="0 0 16 16"><rect x="0.7" y="0.7" width="14.6" height="13.8" rx="1.6" fill="none" stroke="#d2d2d6" stroke-width="1.2"/><path d="M3.2 4.2H4.6M6.2 4.2H12.8M3.2 7.6H4.6M6.2 7.6H12.8M3.2 11H4.6M6.2 11H12.8" stroke="#d2d2d6" stroke-width="1.2"/></svg><svg width="14" height="13" style="left:364px;top:262.3px" viewBox="0 0 14 13"><circle cx="2.4" cy="2.9" r="1.8" fill="none" stroke="#5cc088" stroke-width="1.2"/><circle cx="3" cy="10.6" r="1.8" fill="none" stroke="#5cc088" stroke-width="1.2"/><circle cx="10.3" cy="3.2" r="1.8" fill="none" stroke="#9fd8b6" stroke-width="1.2"/><path d="M4.6 5.2L11.3 10.8" stroke="#3fb873" stroke-width="1.3"/></svg><svg width="15" height="14" style="left:3px;top:299.5px" viewBox="0 0 15 14"><path d="M6.6 12.4A5.4 5.4 0 1 1 11.8 7" fill="none" stroke="#ef7b52" stroke-width="1.35"/><path d="M8.9 4.6L11.9 7.8L14.3 4.2" fill="none" stroke="#ef7b52" stroke-width="1.35"/></svg><div style="position:absolute;left:20.5px;top:296.4px;width:319.5px;height:18px;border:1px solid #39393e;background:none;box-sizing:content-box"></div><svg width="1" height="1" style="left:0;top:0"><path d="M24.6 304.2L29.8 308.59999999999997L35.0 304.2" stroke="#b9b9be" stroke-width="1.1" fill="none"/></svg><svg width="13" height="12" style="left:348.5px;top:299.8px" viewBox="0 0 13 12"><path d="M1 0.8H8.6L12 4V11.2H1Z" fill="none" stroke="#e8e8ea" stroke-width="1.2" stroke-linejoin="round"/><rect x="3" y="0.8" width="4.6" height="3" fill="#e8e8ea"/><rect x="2.8" y="7.6" width="7.4" height="2.8" fill="#e8e8ea"/></svg><svg width="16" height="15" style="left:366px;top:299px" viewBox="0 0 16 15"><circle cx="6" cy="6" r="4.6" fill="none" stroke="#e8e8ea" stroke-width="1.3"/><path d="M9.4 9.4L14.6 13.8" stroke="#e8e8ea" stroke-width="1.4"/></svg><div style="position:absolute;left:0px;top:348px;width:385px;height:1px;background:#3a3a3f;"></div><div style="position:absolute;left:4.5px;top:347.6px;width:51px;height:1.3px;background:#1e7d43;"></div><div style="position:absolute;left:369px;top:353.5px;width:16px;height:547px;background:#1c1c1d;"></div><div style="position:absolute;left:376.4px;top:523px;width:3px;height:237px;background:#9a9a9e;border-radius:1.5px"></div><svg width="15" height="14" style="left:206px;top:353.3px" viewBox="0 0 15 14"><path d="M6.6 12.4A5.4 5.4 0 1 1 11.8 7" fill="none" stroke="#ef7b52" stroke-width="1.35"/><path d="M8.9 4.6L11.9 7.8L14.3 4.2" fill="none" stroke="#ef7b52" stroke-width="1.35"/></svg><div style="position:absolute;left:222.3px;top:350.5px;width:108.6px;height:18px;border:1px solid #39393e;background:none;box-sizing:content-box"></div><svg width="1" height="1" style="left:0;top:0"><path d="M225.8 358.0L231.0 362.4L236.20000000000002 358.0" stroke="#b9b9be" stroke-width="1.1" fill="none"/></svg><div style="position:absolute;left:222px;top:350.2px;width:111px;height:1.4px;background:#2d2d31;"></div><svg width="16" height="16" style="left:223px;top:379.5px" viewBox="0 0 16 16"><rect x="0" y="0" width="15.5" height="15.5" rx="1" fill="#1dad4f"/><path d="M3 7.6L6.6 11.2L12.6 4.6" stroke="#fff" stroke-width="1.5" fill="none"/></svg><div style="position:absolute;left:222.3px;top:412.5px;width:108.6px;height:18px;border:1px solid #39393e;background:none;box-sizing:content-box"></div><svg width="1" height="1" style="left:0;top:0"><path d="M225.5 419.0L229.5 415.0L233.5 419.0M225.5 425.0L229.5 429.0L233.5 425.0" stroke="#b9b9be" stroke-width="1.1" fill="none"/></svg><svg width="16" height="16" style="left:223px;top:450px" viewBox="0 0 16 16"><rect x="0.6" y="0.6" width="14.3" height="14.3" rx="1" fill="none" stroke="#b4b4b8" stroke-width="1.1"/></svg><div style="position:absolute;left:222.3px;top:475.5px;width:108.6px;height:18px;border:1px solid #39393e;background:none;box-sizing:content-box"></div><svg width="1" height="1" style="left:0;top:0"><path d="M225.5 482.0L229.5 478.0L233.5 482.0M225.5 488.0L229.5 492.0L233.5 488.0" stroke="#b9b9be" stroke-width="1.1" fill="none"/></svg><svg width="16" height="16" style="left:223px;top:504px" viewBox="0 0 16 16"><rect x="0" y="0" width="15.5" height="15.5" rx="1" fill="#1dad4f"/><path d="M3 7.6L6.6 11.2L12.6 4.6" stroke="#fff" stroke-width="1.5" fill="none"/></svg><svg width="16" height="16" style="left:223px;top:531px" viewBox="0 0 16 16"><rect x="0" y="0" width="15.5" height="15.5" rx="1" fill="#1dad4f"/><path d="M3 7.6L6.6 11.2L12.6 4.6" stroke="#fff" stroke-width="1.5" fill="none"/></svg><div style="position:absolute;left:80.7px;top:565px;width:287.3px;height:1px;background:#3c3c41;"></div><svg width="1" height="1" style="left:0;top:0"><rect x="4.9" y="559.9" width="10.9" height="10.4" rx="1.8" fill="#5e5e63" stroke="#fff" stroke-width="1.7"/><path d="M10.3 557.3V572.8M2.2 565.1H18" stroke="#fff" stroke-width="1.1"/><path d="M7.6 561V569.4M13 561V569.4M6 562.6H14.8M6 567.6H14.8" stroke="#8b8b90" stroke-width="0.8"/></svg><div style="position:absolute;left:222.3px;top:581px;width:108.6px;height:18.8px;border:1px solid #39393e;background:none;box-sizing:content-box"></div><div style="position:absolute;left:222.3px;top:608px;width:108.6px;height:18.8px;border:1px solid #39393e;background:none;box-sizing:content-box"></div><svg width="16" height="16" style="left:223px;top:637px" viewBox="0 0 16 16"><rect x="0" y="0" width="15.5" height="15.5" rx="1" fill="#1dad4f"/><path d="M3 7.6L6.6 11.2L12.6 4.6" stroke="#fff" stroke-width="1.5" fill="none"/></svg><div style="position:absolute;left:222.3px;top:662px;width:108.6px;height:18.8px;border:1px solid #39393e;background:none;box-sizing:content-box"></div><div style="position:absolute;left:222.3px;top:689px;width:108.6px;height:18.8px;border:1px solid #39393e;background:none;box-sizing:content-box"></div><div style="position:absolute;left:222.3px;top:716px;width:108.6px;height:18.8px;border:1px solid #39393e;background:none;box-sizing:content-box"></div><svg width="16" height="16" style="left:223px;top:745.5px" viewBox="0 0 16 16"><rect x="0.6" y="0.6" width="14.3" height="14.3" rx="1" fill="none" stroke="#b4b4b8" stroke-width="1.1"/></svg><div style="position:absolute;left:69.3px;top:780px;width:298.7px;height:1px;background:#3c3c41;"></div><svg width="17" height="12" style="left:2.5px;top:773.5px" viewBox="0 0 17 12"><path d="M0.7 8.6C1.5 4.8 4.5 3.2 8 3.2H13.3L14.3 8.6Z" fill="none" stroke="#fff" stroke-width="1.2" stroke-linejoin="round"/><path d="M5 3.2C5.5 1.2 7 0.7 9 0.7H15.5L16.3 6" fill="none" stroke="#fff" stroke-width="1.1"/><path d="M0.5 10.8H14.5" stroke="#fff" stroke-width="1.2"/><path d="M6 6H11" stroke="#fff" stroke-width="1.1"/></svg><div style="position:absolute;left:222.3px;top:795.5px;width:108.6px;height:18px;border:1px solid #39393e;background:none;box-sizing:content-box"></div><svg width="1" height="1" style="left:0;top:0"><path d="M225.8 803.0L231.0 807.4L236.20000000000002 803.0" stroke="#b9b9be" stroke-width="1.1" fill="none"/></svg><div style="position:absolute;left:120.7px;top:831px;width:247.3px;height:1px;background:#3c3c41;"></div><svg width="17" height="15" style="left:2.5px;top:823.5px" viewBox="0 0 17 15"><path d="M0.7 1.2C3 0.4 5 2 7.5 2C10 2 12.5 1 15.6 1.4V13.2C12.5 12.6 10 13.8 7.5 13.8C5 13.8 3 12.4 0.7 13Z" fill="none" stroke="#fff" stroke-width="1.2" stroke-linejoin="round"/><path d="M3 4.5H6M3 7H8" stroke="#fff" stroke-width="1"/></svg><div style="position:absolute;left:222.3px;top:847px;width:108.6px;height:18px;border:1px solid #39393e;background:none;box-sizing:content-box"></div><svg width="1" height="1" style="left:0;top:0"><path d="M225.8 854.5L231.0 858.9L236.20000000000002 854.5" stroke="#b9b9be" stroke-width="1.1" fill="none"/></svg><div style="position:absolute;left:88.5px;top:882.6px;width:279.5px;height:1px;background:#3c3c41;"></div><svg width="18" height="16" style="left:1.5px;top:874.5px" viewBox="0 0 18 16"><circle cx="6.5" cy="6.5" r="2" fill="none" stroke="#fff" stroke-width="1.2"/><path d="M6.5 0.8L8 2.3L10.3 1.8L10.8 4L12.6 5L11.8 6.8L12.6 8.6L10.8 9.4L10.3 11.5L8 11L6.5 12.5L5 11L2.7 11.5L2.2 9.4L0.5 8.6L1.3 6.8L0.5 5L2.2 4L2.7 1.8L5 2.3Z" fill="none" stroke="#fff" stroke-width="1.1" stroke-linejoin="round"/><circle cx="13" cy="12" r="3.2" fill="#2d2d31" stroke="#fff" stroke-width="1.1"/><circle cx="13" cy="12" r="1" fill="#fff"/></svg><div style="position:absolute;left:222.5px;top:898px;width:110px;height:1px;background:#3e3e44;"></div><div style="position:absolute;left:385.2px;top:63.1px;width:53.1px;height:57.1px;background:#8c8c8c;"></div><div style="position:absolute;left:387.8px;top:65.2px;width:43.6px;height:44.6px;border:2.2px solid #6b97c9"></div><svg width="18" height="16" style="left:401.8px;top:83.8px" viewBox="0 0 18 16"><path d="M0.5 5.2L9 0.4L17.5 5.2V15.4H0.5Z" fill="#ececec"/><path d="M2.5 7H5V9H2.5ZM7 5.5H9.5V7.5H7ZM12 7H14.5V9H12ZM4.5 11H7V13H4.5ZM9.5 10.5H12V12.5H9.5ZM13.5 12H15.5V14H13.5ZM7.5 8.5H9V10H7.5ZM10.5 3.5H12V5H10.5Z" fill="#bdbdbd"/></svg><div style="position:absolute;left:385px;top:62.6px;width:1215px;height:1px;background:#27262b;"></div><div style="position:absolute;left:1205.7px;top:63.7px;width:342.3px;height:380.2px;background:rgba(24,24,25,0.8);"></div><svg width="14" height="10" style="left:1210.5px;top:68.8px" viewBox="0 0 14 10"><path d="M1 4.6L6.6 0.8L12.2 4.6M1 8.8L6.6 5L12.2 8.8" stroke="#fff" stroke-width="1.2" fill="none"/></svg><div style="position:absolute;left:1312px;top:66.8px;width:186.3px;height:15.6px;background:#141415;border-radius:2px"></div><svg width="1" height="1" style="left:0;top:0"><path d="M1314.8 72.8L1319.1 76.39999999999999L1323.3999999999999 72.8" stroke="#9a9a9e" stroke-width="1" fill="none"/></svg><div style="position:absolute;left:1205.7px;top:98.6px;width:342.3px;height:1px;background:#4a4a4c;"></div><div style="position:absolute;left:1210.2px;top:102.9px;width:8.8px;height:8.5px;background:#ffe64d;"></div><div style="position:absolute;left:1504px;top:101.9px;width:14.0px;height:13.2px;background:#4b4b4c;"></div><svg width="1" height="1" style="left:0;top:0"><path d="M1506.3 109.10000000000001L1509.3 111.9L1515.2 105.5" stroke="#1db954" stroke-width="2.3" fill="none"/></svg><div style="position:absolute;left:1210.2px;top:119.15px;width:8.8px;height:8.5px;background:#ff7d38;"></div><div style="position:absolute;left:1504px;top:118.15px;width:14.0px;height:13.2px;background:#4b4b4c;"></div><svg width="1" height="1" style="left:0;top:0"><path d="M1506.3 125.35000000000001L1509.3 128.15L1515.2 121.75" stroke="#1db954" stroke-width="2.3" fill="none"/></svg><div style="position:absolute;left:1210.2px;top:135.4px;width:8.8px;height:8.5px;background:#b03029;"></div><div style="position:absolute;left:1504px;top:134.4px;width:14.0px;height:13.2px;background:#4b4b4c;"></div><svg width="1" height="1" style="left:0;top:0"><path d="M1506.3 141.6L1509.3 144.4L1515.2 138.0" stroke="#1db954" stroke-width="2.3" fill="none"/></svg><div style="position:absolute;left:1210.2px;top:151.65px;width:8.8px;height:8.5px;background:#9654cc;"></div><div style="position:absolute;left:1504px;top:150.65px;width:14.0px;height:13.2px;background:#4b4b4c;"></div><svg width="1" height="1" style="left:0;top:0"><path d="M1506.3 157.85L1509.3 160.65L1515.2 154.25" stroke="#1db954" stroke-width="2.3" fill="none"/></svg><div style="position:absolute;left:1210.2px;top:167.9px;width:8.8px;height:8.5px;background:#f04040;"></div><div style="position:absolute;left:1504px;top:166.9px;width:14.0px;height:13.2px;background:#4b4b4c;"></div><svg width="1" height="1" style="left:0;top:0"><path d="M1506.3 174.1L1509.3 176.9L1515.2 170.5" stroke="#1db954" stroke-width="2.3" fill="none"/></svg><div style="position:absolute;left:1210.2px;top:184.15px;width:8.8px;height:8.5px;background:#665cc7;"></div><div style="position:absolute;left:1504px;top:183.15px;width:14.0px;height:13.2px;background:#4b4b4c;"></div><svg width="1" height="1" style="left:0;top:0"><path d="M1506.3 190.35L1509.3 193.15L1515.2 186.75" stroke="#1db954" stroke-width="2.3" fill="none"/></svg><div style="position:absolute;left:1210.2px;top:200.4px;width:8.8px;height:8.5px;background:#4d80ba;"></div><div style="position:absolute;left:1504px;top:199.4px;width:14.0px;height:13.2px;background:#4b4b4c;"></div><svg width="1" height="1" style="left:0;top:0"><path d="M1506.3 206.6L1509.3 209.4L1515.2 203.0" stroke="#1db954" stroke-width="2.3" fill="none"/></svg><div style="position:absolute;left:1210.2px;top:216.65px;width:8.8px;height:8.5px;background:#ffffff;"></div><div style="position:absolute;left:1504px;top:215.65px;width:14.0px;height:13.2px;background:#4b4b4c;"></div><svg width="1" height="1" style="left:0;top:0"><path d="M1506.3 222.85L1509.3 225.65L1515.2 219.25" stroke="#1db954" stroke-width="2.3" fill="none"/></svg><div style="position:absolute;left:1210.2px;top:232.9px;width:8.8px;height:8.5px;background:#5ed194;"></div><div style="position:absolute;left:1504px;top:231.9px;width:14.0px;height:13.2px;background:#4b4b4c;"></div><svg width="1" height="1" style="left:0;top:0"><path d="M1506.3 239.1L1509.3 241.9L1515.2 235.5" stroke="#1db954" stroke-width="2.3" fill="none"/></svg><div style="position:absolute;left:1210.2px;top:249.14999999999998px;width:8.8px;height:8.5px;background:#38489b;"></div><div style="position:absolute;left:1504px;top:248.14999999999998px;width:14.0px;height:13.2px;background:#4b4b4c;"></div><div style="position:absolute;left:1210.2px;top:265.4px;width:8.8px;height:8.5px;background:#cd22d6;"></div><div style="position:absolute;left:1504px;top:264.4px;width:14.0px;height:13.2px;background:#4b4b4c;"></div><div style="position:absolute;left:1210.2px;top:281.65px;width:8.8px;height:8.5px;background:#49adcf;"></div><div style="position:absolute;left:1504px;top:280.65px;width:14.0px;height:13.2px;background:#4b4b4c;"></div><div style="position:absolute;left:1210.2px;top:297.9px;width:8.8px;height:8.5px;background:#ffff00;"></div><div style="position:absolute;left:1504px;top:296.9px;width:14.0px;height:13.2px;background:#4b4b4c;"></div><div style="position:absolute;left:1210.2px;top:314.15px;width:8.8px;height:8.5px;background:#e6e6e6;"></div><div style="position:absolute;left:1504px;top:313.15px;width:14.0px;height:13.2px;background:#4b4b4c;"></div><svg width="1" height="1" style="left:0;top:0"><path d="M1506.3 320.34999999999997L1509.3 323.15L1515.2 316.75" stroke="#1db954" stroke-width="2.3" fill="none"/></svg><div style="position:absolute;left:1205.7px;top:347.7px;width:342.3px;height:1.2px;background:#4a4a4c;"></div><div style="position:absolute;left:1582.4px;top:177px;width:7.4px;height:609px;background:#35523f;border-radius:3px"></div><div style="position:absolute;left:1583.7px;top:177px;width:4.9px;height:609px;background:#00ae42;"></div><div style="position:absolute;left:1581.4px;top:172px;width:9.4px;height:9.4px;border-radius:5px;background:#00ae42;box-shadow:0 0 0 0.8px #2f7a4a"></div><div style="position:absolute;left:1581.1px;top:781.4px;width:9.4px;height:9.4px;border-radius:5px;background:#00ae42;box-shadow:0 0 0 0.8px #2f7a4a"></div><div style="position:absolute;left:1548.3px;top:148.3px;width:28.4px;height:27.8px;background:#505055;"></div><div style="position:absolute;left:1548.7px;top:786.7px;width:28.3px;height:28.5px;background:#49494e;"></div><div style="position:absolute;left:631.5px;top:882.4px;width:674px;height:7.2px;background:#2c4a38;border-radius:3.5px"></div><div style="position:absolute;left:632px;top:883.6px;width:673px;height:4.8px;background:#00ae42;border-radius:2.4px"></div><div style="position:absolute;left:1299.6px;top:881.2px;width:9.6px;height:9.6px;border-radius:5px;background:#00ae42;box-shadow:0 0 0 1px #2e5a40"></div><div style="position:absolute;left:1313px;top:878.2px;width:10.8px;height:15.5px;background:#3f3e45;"></div><svg width="8" height="8" style="left:1582px;top:882px" viewBox="0 0 8 8"><rect x="0.8" y="0.8" width="6.4" height="6.4" rx="1.5" fill="#2e7a4a" stroke="#00ae42" stroke-width="1"/><path d="M2.2 3H5.8M2.2 5H5.8" stroke="#9ad9b0" stroke-width="0.8"/></svg>
<div style="position:absolute;left:0;top:0;width:1600px;height:900px;will-change:transform"><span class="t" style="left:29.50px;top:9.70px;font-size:11.2px;line-height:12px;color:#fff;-webkit-text-stroke:0.35px currentColor;letter-spacing:-0.244px;">File</span><span class="t" style="left:708.50px;top:9.50px;font-size:10.8px;line-height:12px;color:#fff;letter-spacing:-0.098px;">Rhombic_Dodecahedral_Sierpinski_Pyramid_Level_3_10...</span><span class="t" style="left:87.00px;top:38.20px;font-size:14.0px;line-height:16px;color:#fff;letter-spacing:-0.135px;">Prepare</span><span class="t" style="left:211.00px;top:38.20px;font-size:14.0px;line-height:16px;color:#fff;letter-spacing:-0.049px;">Preview</span><span class="t" style="left:339.00px;top:38.20px;font-size:14.0px;line-height:16px;color:#fff;letter-spacing:-0.059px;">Device</span><span class="t" style="left:463.00px;top:38.20px;font-size:14.0px;line-height:16px;color:#fff;letter-spacing:0.070px;">Project</span><span class="t" style="left:575.00px;top:38.20px;font-size:14.0px;line-height:16px;color:#fff;letter-spacing:0.156px;">Calibration</span><span class="t" style="left:1339.00px;top:38.00px;font-size:14.0px;line-height:16px;color:#fff;letter-spacing:-0.009px;">Slice plate</span><span class="t" style="left:1478.00px;top:38.00px;font-size:14.0px;line-height:16px;color:#fff;letter-spacing:0.195px;">Print plate</span><span class="t" style="left:33.70px;top:68.00px;font-size:14.0px;line-height:16px;color:#fff;letter-spacing:0.011px;">Printer</span><span class="t" style="left:20.50px;top:107.00px;font-size:14.0px;line-height:16px;color:#fff;letter-spacing:-0.168px;">Bambu Lab P1S 0.4 nozzle</span><span class="t" style="left:10.00px;top:135.00px;font-size:14.0px;line-height:16px;color:#fff;letter-spacing:0.026px;">Plate type</span><span class="t" style="left:109.50px;top:135.00px;font-size:14.0px;line-height:16px;color:#fff;letter-spacing:-0.068px;">Textured PEI Plate</span><span class="t" style="left:34.50px;top:179.00px;font-size:14.0px;line-height:16px;color:#fff;letter-spacing:-0.027px;">Filament</span><span class="t" style="left:13.60px;top:220.60px;font-size:12.2px;line-height:14px;color:#222;">1</span><span class="t" style="left:48.80px;top:220.60px;font-size:13.2px;line-height:15px;color:#fff;letter-spacing:-0.392px;">PolyLite PLA</span><span class="t" style="left:36.20px;top:261.20px;font-size:14.0px;line-height:16px;color:#fff;letter-spacing:-0.500px;">Process</span><span class="t" style="left:102.50px;top:262.80px;font-size:10.8px;line-height:12px;color:#fff;letter-spacing:0.256px;">Global</span><span class="t" style="left:142.00px;top:262.80px;font-size:10.8px;line-height:12px;color:#85858b;letter-spacing:0.282px;">Objects</span><span class="t" style="left:241.80px;top:261.20px;font-size:14.0px;line-height:16px;color:#fff;letter-spacing:-0.212px;">Advanced</span><span class="t" style="left:37.50px;top:298.20px;font-size:14.0px;line-height:16px;color:#fff;letter-spacing:-0.058px;">* 0.16mm Optimal @BBL X1C</span><span class="t" style="left:6.00px;top:331.50px;font-size:14.0px;line-height:16px;color:#ef7b52;font-weight:700;letter-spacing:0.089px;">Quality</span><span class="t" style="left:66.70px;top:331.50px;font-size:14.0px;line-height:16px;color:#ef7b52;letter-spacing:0.223px;">Strength</span><span class="t" style="left:133.80px;top:331.50px;font-size:14.0px;line-height:16px;color:#6b6b70;letter-spacing:-0.321px;">Speed</span><span class="t" style="left:186.20px;top:331.50px;font-size:14.0px;line-height:16px;color:#6b6b70;letter-spacing:0.292px;">Support</span><span class="t" style="left:250.50px;top:331.50px;font-size:14.0px;line-height:16px;color:#6b6b70;letter-spacing:-0.103px;">Others</span><span class="t" style="left:20.50px;top:352.00px;font-size:14.0px;line-height:16px;color:#ef7b52;letter-spacing:0.007px;">Seam position</span><span class="t" style="left:239.50px;top:352.00px;font-size:14.0px;line-height:16px;color:#fff;letter-spacing:-0.350px;">Back</span><span class="t" style="left:20.50px;top:379.00px;font-size:14.0px;line-height:16px;color:#bababf;letter-spacing:-0.009px;">Smart scarf seam application</span><span class="t" style="left:20.50px;top:406.50px;font-size:14.0px;line-height:16px;color:#bababf;letter-spacing:0.075px;">Scarf application angle</span><span class="t" style="left:20.50px;top:422.00px;font-size:14.0px;line-height:16px;color:#bababf;letter-spacing:0.176px;">threshold</span><span class="t" style="left:240.00px;top:414.00px;font-size:14.0px;line-height:16px;color:#fff;letter-spacing:-0.350px;">155</span><span class="t" style="left:326.50px;top:417.00px;font-size:10px;line-height:11px;color:#77777c;">°</span><span class="t" style="left:20.50px;top:449.50px;font-size:14.0px;line-height:16px;color:#bababf;letter-spacing:0.075px;">Scarf around entire wall</span><span class="t" style="left:20.50px;top:476.50px;font-size:14.0px;line-height:16px;color:#bababf;letter-spacing:-0.173px;">Scarf steps</span><span class="t" style="left:240.00px;top:476.70px;font-size:14.0px;line-height:16px;color:#fff;letter-spacing:-0.350px;">10</span><span class="t" style="left:20.50px;top:503.70px;font-size:14.0px;line-height:16px;color:#bababf;letter-spacing:0.096px;">Scarf joint for inner walls</span><span class="t" style="left:20.50px;top:530.70px;font-size:14.0px;line-height:16px;color:#bababf;letter-spacing:0.059px;">Role-based wipe speed</span><span class="t" style="left:21.20px;top:558.20px;font-size:13.6px;line-height:15px;color:#fff;font-weight:700;letter-spacing:-0.400px;">Precision</span><span class="t" style="left:20.50px;top:582.50px;font-size:14.0px;line-height:16px;color:#bababf;letter-spacing:-0.026px;">Slice gap closing radius</span><span class="t" style="left:226.80px;top:582.70px;font-size:14.0px;line-height:16px;color:#fff;letter-spacing:-0.262px;">0.049</span><span class="t" style="left:309.20px;top:584.50px;font-size:12px;line-height:14px;color:#7b7b80;letter-spacing:-0.350px;">mm</span><span class="t" style="left:20.50px;top:609.50px;font-size:14.0px;line-height:16px;color:#bababf;letter-spacing:0.016px;">Resolution</span><span class="t" style="left:226.80px;top:609.70px;font-size:14.0px;line-height:16px;color:#fff;letter-spacing:-0.262px;">0.012</span><span class="t" style="left:309.20px;top:611.50px;font-size:12px;line-height:14px;color:#7b7b80;letter-spacing:-0.350px;">mm</span><span class="t" style="left:20.50px;top:637.00px;font-size:14.0px;line-height:16px;color:#bababf;letter-spacing:0.314px;">Arc fitting</span><span class="t" style="left:20.50px;top:664.00px;font-size:14.0px;line-height:16px;color:#bababf;letter-spacing:0.125px;">X-Y hole compensation</span><span class="t" style="left:226.80px;top:664.00px;font-size:14.0px;line-height:16px;color:#fff;">0</span><span class="t" style="left:309.20px;top:665.80px;font-size:12px;line-height:14px;color:#7b7b80;letter-spacing:-0.350px;">mm</span><span class="t" style="left:20.50px;top:690.80px;font-size:14.0px;line-height:16px;color:#bababf;letter-spacing:0.185px;">X-Y contour compensation</span><span class="t" style="left:226.80px;top:690.80px;font-size:14.0px;line-height:16px;color:#fff;">0</span><span class="t" style="left:309.20px;top:692.60px;font-size:12px;line-height:14px;color:#7b7b80;letter-spacing:-0.350px;">mm</span><span class="t" style="left:20.50px;top:718.00px;font-size:14.0px;line-height:16px;color:#bababf;letter-spacing:0.181px;">Elephant foot compensation</span><span class="t" style="left:226.80px;top:718.00px;font-size:14.0px;line-height:16px;color:#fff;letter-spacing:-0.350px;">0.15</span><span class="t" style="left:309.20px;top:719.80px;font-size:12px;line-height:14px;color:#7b7b80;letter-spacing:-0.350px;">mm</span><span class="t" style="left:20.50px;top:745.00px;font-size:14.0px;line-height:16px;color:#bababf;letter-spacing:-0.111px;">Precise Z height</span><span class="t" style="left:21.20px;top:772.20px;font-size:13.6px;line-height:15px;color:#fff;font-weight:700;letter-spacing:0.090px;">Ironing</span><span class="t" style="left:20.50px;top:796.90px;font-size:14.0px;line-height:16px;color:#bababf;letter-spacing:0.182px;">Ironing Type</span><span class="t" style="left:239.50px;top:796.90px;font-size:14.0px;line-height:16px;color:#fff;letter-spacing:0.186px;">No ironing</span><span class="t" style="left:21.20px;top:824.00px;font-size:13.6px;line-height:15px;color:#fff;font-weight:700;letter-spacing:0.314px;">Wall generator</span><span class="t" style="left:20.50px;top:848.20px;font-size:14.0px;line-height:16px;color:#bababf;letter-spacing:0.151px;">Wall generator</span><span class="t" style="left:239.50px;top:848.20px;font-size:14.0px;line-height:16px;color:#fff;letter-spacing:-0.500px;">Classic</span><span class="t" style="left:21.20px;top:875.40px;font-size:13.6px;line-height:15px;color:#fff;font-weight:700;letter-spacing:0.119px;">Advanced</span><span class="t" style="left:395.40px;top:74.20px;font-size:12.5px;line-height:14px;color:#fff;">1</span><span class="t" style="left:1231.00px;top:67.50px;font-size:11.6px;line-height:12px;color:#fff;font-weight:700;letter-spacing:-0.179px;">Color Scheme</span><span class="t" style="left:1329.40px;top:68.60px;font-size:11.6px;line-height:12px;color:#fff;letter-spacing:0.190px;">Line Type</span><span class="t" style="left:1210.00px;top:85.30px;font-size:11.6px;line-height:12px;color:#fff;font-weight:700;letter-spacing:0.092px;">Line Type</span><span class="t" style="left:1319.40px;top:85.30px;font-size:11.6px;line-height:12px;color:#fff;font-weight:700;letter-spacing:-0.220px;">Time</span><span class="t" style="left:1368.50px;top:85.30px;font-size:11.6px;line-height:12px;color:#fff;font-weight:700;letter-spacing:-0.089px;">Percent</span><span class="t" style="left:1416.30px;top:85.30px;font-size:11.6px;line-height:12px;color:#fff;font-weight:700;letter-spacing:0.097px;">Used filament</span><span class="t" style="left:1502.80px;top:85.30px;font-size:11.6px;line-height:12px;color:#fff;font-weight:700;letter-spacing:-0.175px;">Display</span><span class="t" style="left:1222.50px;top:101.90px;font-size:11.6px;line-height:12px;color:#fff;letter-spacing:0.253px;">Inner wall</span><span class="t" style="left:1319.40px;top:101.90px;font-size:11.6px;line-height:12px;color:#fff;letter-spacing:-0.010px;">26m15s</span><span class="t" style="left:1368.60px;top:101.90px;font-size:11.6px;line-height:12px;color:#fff;letter-spacing:-0.350px;">16.0%</span><span class="t" style="left:1416.30px;top:101.90px;font-size:11.6px;line-height:12px;color:#fff;letter-spacing:-0.031px;">4.85 m</span><span class="t" style="left:1456.50px;top:101.90px;font-size:11.6px;line-height:12px;color:#fff;letter-spacing:-0.031px;">14.48 g</span><span class="t" style="left:1222.50px;top:118.15px;font-size:11.6px;line-height:12px;color:#fff;letter-spacing:0.311px;">Outer wall</span><span class="t" style="left:1319.40px;top:118.15px;font-size:11.6px;line-height:12px;color:#fff;letter-spacing:-0.010px;">43m38s</span><span class="t" style="left:1368.60px;top:118.15px;font-size:11.6px;line-height:12px;color:#fff;letter-spacing:-0.350px;">26.6%</span><span class="t" style="left:1416.30px;top:118.15px;font-size:11.6px;line-height:12px;color:#fff;letter-spacing:-0.031px;">4.49 m</span><span class="t" style="left:1456.50px;top:118.15px;font-size:11.6px;line-height:12px;color:#fff;letter-spacing:-0.031px;">13.39 g</span><span class="t" style="left:1222.50px;top:134.40px;font-size:11.6px;line-height:12px;color:#fff;letter-spacing:0.130px;">Sparse infill</span><span class="t" style="left:1319.40px;top:134.40px;font-size:11.6px;line-height:12px;color:#fff;letter-spacing:-0.010px;">18m58s</span><span class="t" style="left:1368.60px;top:134.40px;font-size:11.6px;line-height:12px;color:#fff;letter-spacing:-0.154px;">11.5%</span><span class="t" style="left:1416.30px;top:134.40px;font-size:11.6px;line-height:12px;color:#fff;letter-spacing:-0.031px;">3.26 m</span><span class="t" style="left:1456.50px;top:134.40px;font-size:11.6px;line-height:12px;color:#fff;letter-spacing:-0.087px;">9.73 g</span><span class="t" style="left:1222.50px;top:150.65px;font-size:11.6px;line-height:12px;color:#fff;letter-spacing:0.253px;">Internal solid infill</span><span class="t" style="left:1319.40px;top:150.65px;font-size:11.6px;line-height:12px;color:#fff;letter-spacing:-0.010px;">40m48s</span><span class="t" style="left:1368.60px;top:150.65px;font-size:11.6px;line-height:12px;color:#fff;letter-spacing:-0.350px;">24.8%</span><span class="t" style="left:1416.30px;top:150.65px;font-size:11.6px;line-height:12px;color:#fff;letter-spacing:-0.031px;">7.42 m</span><span class="t" style="left:1456.50px;top:150.65px;font-size:11.6px;line-height:12px;color:#fff;letter-spacing:-0.031px;">22.13 g</span><span class="t" style="left:1222.50px;top:166.90px;font-size:11.6px;line-height:12px;color:#fff;letter-spacing:0.306px;">Top surface</span><span class="t" style="left:1319.40px;top:166.90px;font-size:11.6px;line-height:12px;color:#fff;letter-spacing:-0.302px;">14s</span><span class="t" style="left:1368.60px;top:166.90px;font-size:11.6px;line-height:12px;color:#fff;letter-spacing:-0.350px;">0.1%</span><span class="t" style="left:1416.30px;top:166.90px;font-size:11.6px;line-height:12px;color:#fff;letter-spacing:-0.031px;">0.01 m</span><span class="t" style="left:1456.50px;top:166.90px;font-size:11.6px;line-height:12px;color:#fff;letter-spacing:-0.087px;">0.04 g</span><span class="t" style="left:1222.50px;top:183.15px;font-size:11.6px;line-height:12px;color:#fff;letter-spacing:0.347px;">Bottom surface</span><span class="t" style="left:1319.40px;top:183.15px;font-size:11.6px;line-height:12px;color:#fff;letter-spacing:-0.086px;">4m3s</span><span class="t" style="left:1368.60px;top:183.15px;font-size:11.6px;line-height:12px;color:#fff;letter-spacing:-0.350px;">2.5%</span><span class="t" style="left:1416.30px;top:183.15px;font-size:11.6px;line-height:12px;color:#fff;letter-spacing:-0.031px;">0.76 m</span><span class="t" style="left:1456.50px;top:183.15px;font-size:11.6px;line-height:12px;color:#fff;letter-spacing:-0.087px;">2.26 g</span><span class="t" style="left:1222.50px;top:199.40px;font-size:11.6px;line-height:12px;color:#fff;letter-spacing:0.397px;">Bridge</span><span class="t" style="left:1319.40px;top:199.40px;font-size:11.6px;line-height:12px;color:#fff;letter-spacing:-0.350px;">1s</span><span class="t" style="left:1368.60px;top:199.40px;font-size:11.6px;line-height:12px;color:#fff;letter-spacing:-0.350px;">&lt;0.1%</span><span class="t" style="left:1416.30px;top:199.40px;font-size:11.6px;line-height:12px;color:#fff;letter-spacing:-0.031px;">0.00 m</span><span class="t" style="left:1456.50px;top:199.40px;font-size:11.6px;line-height:12px;color:#fff;letter-spacing:-0.087px;">0.01 g</span><span class="t" style="left:1222.50px;top:215.65px;font-size:11.6px;line-height:12px;color:#fff;letter-spacing:0.210px;">Gap infill</span><span class="t" style="left:1319.40px;top:215.65px;font-size:11.6px;line-height:12px;color:#fff;letter-spacing:-0.302px;">19s</span><span class="t" style="left:1368.60px;top:215.65px;font-size:11.6px;line-height:12px;color:#fff;letter-spacing:-0.350px;">0.2%</span><span class="t" style="left:1416.30px;top:215.65px;font-size:11.6px;line-height:12px;color:#fff;letter-spacing:-0.031px;">0.01 m</span><span class="t" style="left:1456.50px;top:215.65px;font-size:11.6px;line-height:12px;color:#fff;letter-spacing:-0.087px;">0.04 g</span><span class="t" style="left:1222.50px;top:231.90px;font-size:11.6px;line-height:12px;color:#fff;letter-spacing:0.209px;">Custom</span><span class="t" style="left:1319.40px;top:231.90px;font-size:11.6px;line-height:12px;color:#fff;letter-spacing:-0.086px;">6m1s</span><span class="t" style="left:1368.60px;top:231.90px;font-size:11.6px;line-height:12px;color:#fff;letter-spacing:-0.350px;">3.7%</span><span class="t" style="left:1416.30px;top:231.90px;font-size:11.6px;line-height:12px;color:#fff;letter-spacing:-0.031px;">0.03 m</span><span class="t" style="left:1456.50px;top:231.90px;font-size:11.6px;line-height:12px;color:#fff;letter-spacing:-0.087px;">0.09 g</span><span class="t" style="left:1222.50px;top:248.15px;font-size:11.6px;line-height:12px;color:#fff;letter-spacing:0.204px;">Travel</span><span class="t" style="left:1319.40px;top:248.15px;font-size:11.6px;line-height:12px;color:#fff;letter-spacing:0.022px;">24m8s</span><span class="t" style="left:1368.60px;top:248.15px;font-size:11.6px;line-height:12px;color:#fff;letter-spacing:-0.350px;">14.7%</span><span class="t" style="left:1222.50px;top:264.40px;font-size:11.6px;line-height:12px;color:#fff;letter-spacing:0.271px;">Retract</span><span class="t" style="left:1222.50px;top:280.65px;font-size:11.6px;line-height:12px;color:#fff;letter-spacing:0.439px;">Unretract</span><span class="t" style="left:1222.50px;top:296.90px;font-size:11.6px;line-height:12px;color:#fff;letter-spacing:0.350px;">Wipe</span><span class="t" style="left:1222.50px;top:313.15px;font-size:11.6px;line-height:12px;color:#fff;letter-spacing:-0.323px;">Seams</span><span class="t" style="left:1209.80px;top:334.20px;font-size:11.6px;line-height:12px;color:#fff;font-weight:700;letter-spacing:0.158px;">Total Estimation</span><span class="t" style="left:1209.80px;top:351.30px;font-size:11.6px;line-height:12px;color:#fff;letter-spacing:0.308px;">Total Filament:</span><span class="t" style="left:1319.40px;top:351.30px;font-size:11.6px;line-height:12px;color:#fff;letter-spacing:0.032px;">20.84 m</span><span class="t" style="left:1371.60px;top:351.30px;font-size:11.6px;line-height:12px;color:#fff;letter-spacing:0.119px;">62.16 g</span><span class="t" style="left:1209.80px;top:366.75px;font-size:11.6px;line-height:12px;color:#fff;letter-spacing:0.230px;">Model Filament:</span><span class="t" style="left:1319.40px;top:366.75px;font-size:11.6px;line-height:12px;color:#fff;letter-spacing:0.032px;">20.84 m</span><span class="t" style="left:1371.60px;top:366.75px;font-size:11.6px;line-height:12px;color:#fff;letter-spacing:0.119px;">62.16 g</span><span class="t" style="left:1209.80px;top:382.20px;font-size:11.6px;line-height:12px;color:#fff;letter-spacing:-0.016px;">Cost:</span><span class="t" style="left:1319.40px;top:382.20px;font-size:11.6px;line-height:12px;color:#fff;letter-spacing:-0.159px;">1.58</span><span class="t" style="left:1209.80px;top:397.65px;font-size:11.6px;line-height:12px;color:#fff;letter-spacing:0.176px;">Prepare time:</span><span class="t" style="left:1319.40px;top:397.65px;font-size:11.6px;line-height:12px;color:#fff;letter-spacing:0.022px;">5m46s</span><span class="t" style="left:1209.80px;top:413.10px;font-size:11.6px;line-height:12px;color:#fff;letter-spacing:0.344px;">Model printing time:</span><span class="t" style="left:1319.40px;top:413.10px;font-size:11.6px;line-height:12px;color:#fff;letter-spacing:0.162px;">2h38m</span><span class="t" style="left:1209.80px;top:428.55px;font-size:11.6px;line-height:12px;color:#fff;letter-spacing:0.386px;">Total time:</span><span class="t" style="left:1319.40px;top:428.55px;font-size:11.6px;line-height:12px;color:#fff;letter-spacing:0.162px;">2h44m</span><span class="t" style="left:1552.20px;top:149.40px;font-size:11px;line-height:12px;color:#1eaa50;letter-spacing:0.270px;">440</span><span class="t" style="left:1548.30px;top:162.80px;font-size:11px;line-height:12px;color:#1eaa50;letter-spacing:-0.350px;">70.44</span><span class="t" style="left:1562.30px;top:788.10px;font-size:11px;line-height:12px;color:#1eaa50;">1</span><span class="t" style="left:1552.10px;top:801.80px;font-size:11px;line-height:12px;color:#1eaa50;letter-spacing:0.350px;">0.20</span><span class="t" style="left:1314.80px;top:879.60px;font-size:11px;line-height:12px;color:#1eaa50;">4</span></div>
</body></html>
